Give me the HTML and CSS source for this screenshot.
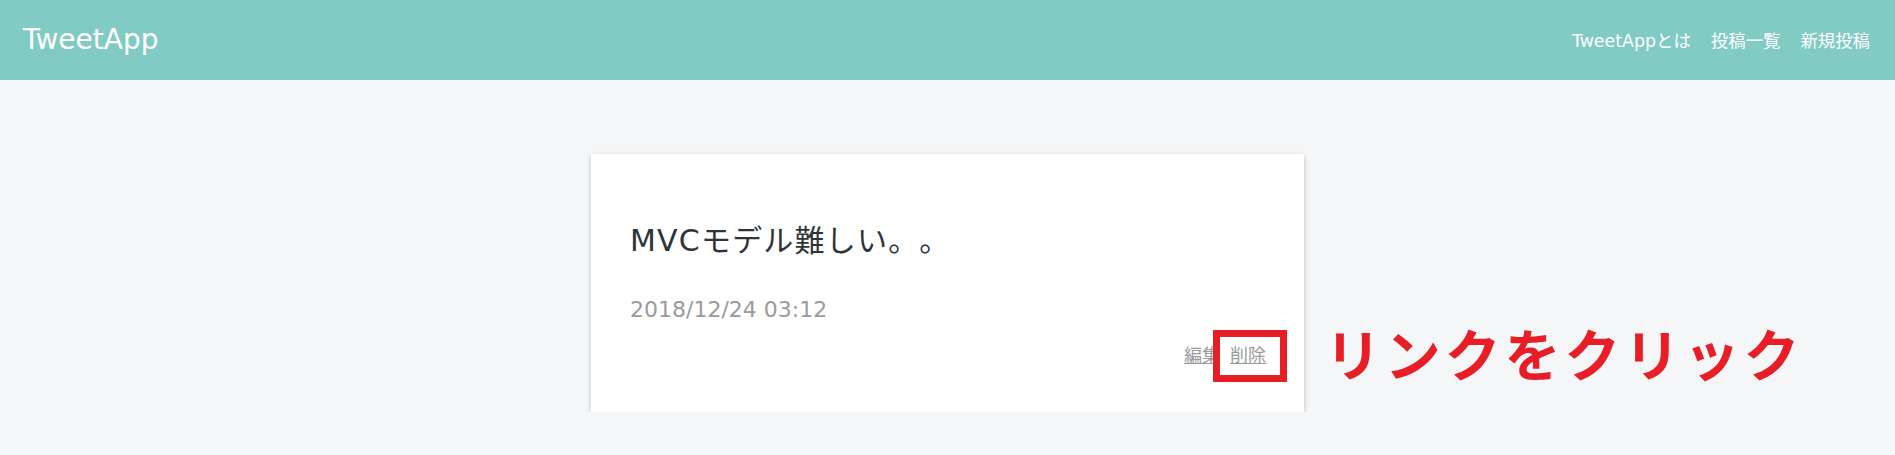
FILE: index.html
```html
<!DOCTYPE html>
<html lang="ja">
<head>
<meta charset="utf-8">
<title>TweetApp</title>
<link rel="stylesheet" href="styles.css">
</head>
<body>
<header class="header">
  <div class="header-logo">TweetApp</div>
  <nav class="header-menus">
    <a class="header-link" href="#">TweetAppとは</a>
    <a class="header-link" href="#">投稿一覧</a>
    <a class="header-link" href="#">新規投稿</a>
  </nav>
</header>
<main class="main">
  <div class="post-card">
    <div class="post-content">MVCモデル難しい。。</div>
    <div class="post-time">2018/12/24 03:12</div>
    <div class="post-menus">
      <a class="post-link" href="#">編集</a>
      <a class="post-link post-link-target" href="#">削除<span class="highlight-box"></span></a>
    </div>
    <div class="annotation">リンクをクリック</div>
  </div>
</main>
</body>
</html>
```

FILE: styles.css
```css
* {
  box-sizing: border-box;
}

html, body {
  margin: 0;
  padding: 0;
}

body {
  background: #f5f6f8;
  font-family: "DejaVu Sans", "Noto Sans CJK JP", sans-serif;
  color: #2f3438;
  text-spacing-trim: space-all;
}

.header {
  height: 80px;
  background: #81cbc4;
  display: flex;
  align-items: center;
  justify-content: space-between;
  padding: 0 25px 0 23px;
}

.header-logo {
  color: #ffffff;
  font-size: 28px;
  line-height: 1;
  margin-top: -1px;
}

.header-menus {
  display: flex;
  gap: 20px;
  margin-top: -2px;
}

.header-link {
  color: #ffffff;
  font-size: 17.4px;
  text-decoration: none;
}

.main {
  padding-top: 74px;
  display: flex;
  justify-content: center;
}

.post-card {
  position: relative;
  width: 713px;
  background: #ffffff;
  box-shadow: 0 2px 5px rgba(0, 0, 0, 0.22);
  padding: 67px 38px 43px 39px;
  display: flex;
  flex-direction: column;
}

.post-content {
  font-size: 30px;
  line-height: 40px;
  letter-spacing: 1.2px;
  color: #2f3438;
  text-spacing-trim: space-all;
}

.post-time {
  margin-top: 34px;
  font-size: 22px;
  line-height: 30px;
  color: #9a9a9a;
}

.post-menus {
  margin-top: 18px;
  display: flex;
  justify-content: flex-end;
  gap: 10px;
  font-size: 18px;
  line-height: 26px;
}

.post-link {
  color: #9a9a9a;
  text-decoration: underline;
}

.post-link-target {
  position: relative;
}

.highlight-box {
  position: absolute;
  left: -17px;
  right: -21px;
  top: -13px;
  bottom: -13px;
  border: 7px solid #e81d25;
}

.annotation {
  position: absolute;
  left: calc(100% + 21px);
  top: 163px;
  font-size: 56px;
  line-height: 70px;
  font-weight: 700;
  letter-spacing: 3.8px;
  color: #e81d25;
  white-space: nowrap;
  font-family: "Noto Sans CJK JP", sans-serif;
}
```
